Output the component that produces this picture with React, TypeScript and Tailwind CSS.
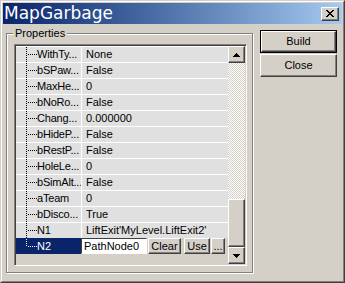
import React from "react"

const ROWS: [string, string][] = [
  ["WithTy...", "None"],
  ["bSPaw...", "False"],
  ["MaxHe...", "0"],
  ["bNoRo...", "False"],
  ["Chang...", "0.000000"],
  ["bHideP...", "False"],
  ["bRestP...", "False"],
  ["HoleLe...", "0"],
  ["bSimAlt...", "False"],
  ["aTeam", "0"],
  ["bDisco...", "True"],
  ["N1", "LiftExit'MyLevel.LiftExit2'"],
]

const raised =
  "border border-t-white border-l-white border-r-[#404040] border-b-[#404040] shadow-[inset_-1px_-1px_0_#808080] bg-[#d4d0c8]"

// dotted tree connector, drawn pixel by pixel
function TreeLines({ last, color }: { last?: boolean; color: string }) {
  const d: string[] = []
  const end = last ? 8 : 15
  for (let y = 0; y < end; y += 2) d.push(`M10 ${y}h1v1h-1z`)
  for (let x = 12; x < 21; x += 2) d.push(`M${x} 7h1v1h-1z`)
  return (
    <svg width="21" height="15" className="shrink-0" shapeRendering="crispEdges">
      <path d={d.join(" ")} fill={color} />
    </svg>
  )
}

function Arrow({ down }: { down?: boolean }) {
  return (
    <svg width="7" height="4" shapeRendering="crispEdges" className={down ? "rotate-180" : ""}>
      <path d="M3 0h1v1H3z M2 1h3v1H2z M1 2h5v1H1z M0 3h7v1H0z" fill="#000" />
    </svg>
  )
}

export default function App() {
  return (
    <div className="w-[345px] h-[283px] bg-[#d4d0c8] border border-t-[#d4d0c8] border-l-[#d4d0c8] border-r-[#404040] border-b-[#404040] font-['Liberation_Sans',Arial,sans-serif] text-[11px] text-black">
      <div className="h-full flex flex-col p-[1px] border border-t-white border-l-white border-r-[#808080] border-b-[#808080]">
        {/* Title bar */}
        <div className="h-[21px] shrink-0 flex items-center bg-linear-to-r from-[#0a246a] to-[#a6caf0]">
          <span className="pl-[1px] font-['DejaVu_Sans',sans-serif] text-[17px] leading-[21px] text-white">
            MapGarbage
          </span>
          <div className={`ml-auto mr-[3px] w-[18px] h-[14px] flex items-center justify-center ${raised}`}>
            <svg width="8" height="7" shapeRendering="crispEdges">
              <path
                d="M0 0h2v1H0z M6 0h2v1H6z M1 1h2v1H1z M5 1h2v1H5z M2 2h4v1H2z M3 3h2v1H3z M2 4h4v1H2z M1 5h2v1H1z M5 5h2v1H5z M0 6h2v1H0z M6 6h2v1H6z"
                fill="#000"
              />
            </svg>
          </div>
        </div>

        <div className="flex pl-[3px] pt-[3px]">
          <fieldset className="w-[247px] h-[246px] border border-[#808080] shadow-[1px_1px_0_#fff,inset_1px_1px_0_#fff]">
            <legend className="ml-[6px] px-[2px] leading-[13px] bg-[#d4d0c8]">Properties</legend>

            {/* Property list */}
            <div className="ml-[7px] mt-[4px] w-[233px] h-[222px] flex p-[1px] border border-t-[#808080] border-l-[#808080] border-r-white border-b-white shadow-[inset_1px_1px_0_#404040,inset_-1px_-1px_0_#d4d0c8]">
              <div className="flex-1 flex flex-col bg-[#d4d0c8]">
                {ROWS.map(([name, value]) => (
                  <div key={name} className="flex h-[16px] border-t border-white bg-[#e0e0e0]">
                    <div className="w-[65px] shrink-0 flex items-center">
                      <TreeLines color="#000" />
                      <span className="leading-[15px] whitespace-nowrap tracking-[-0.2px]">{name}</span>
                    </div>
                    <div className="flex-1 flex items-center border-l border-white pl-[4px] leading-[15px] whitespace-nowrap overflow-hidden">
                      {value}
                    </div>
                  </div>
                ))}
                <div className="flex h-[16px]">
                  <div className="w-[65px] flex items-center bg-[#0a246a] text-white">
                    <TreeLines last color="#fff" />
                    <span className="leading-[15px]">N2</span>
                  </div>
                  <div className="flex-1 flex items-stretch">
                    <div className="w-[66px] bg-white pl-[2px] flex items-center border border-t-[#404040] border-l-[#404040] border-r-white border-b-white">
                      PathNode0
                    </div>
                    <div className={`ml-[1px] w-[33px] flex items-center justify-center ${raised}`}>Clear</div>
                    <div className={`ml-[3px] w-[26px] flex items-center justify-center ${raised}`}>Use</div>
                    <div className={`ml-[1px] w-[14px] flex items-center justify-center ${raised}`}>...</div>
                  </div>
                </div>
              </div>

              {/* Scrollbar */}
              <div className="w-[17px] flex flex-col">
                <div className={`h-[17px] flex items-center justify-center ${raised}`}>
                  <Arrow />
                </div>
                <div className="flex-1 bg-[repeating-conic-gradient(#d4d0c8_0%_25%,#ffffff_0%_50%)] bg-[length:2px_2px]" />
                <div className={`h-[48px] ${raised}`} />
                <div className={`h-[17px] flex items-center justify-center ${raised}`}>
                  <Arrow down />
                </div>
              </div>
            </div>
          </fieldset>

          <div className="ml-[7px] mt-[3px] flex flex-col gap-[1px]">
            <div className="w-[77px] h-[23px] border border-black flex">
              <div className={`flex-1 flex items-center justify-center ${raised}`}>Build</div>
            </div>
            <div className={`w-[77px] h-[23px] flex items-center justify-center ${raised}`}>Close</div>
          </div>
        </div>
      </div>
    </div>
  )
}
